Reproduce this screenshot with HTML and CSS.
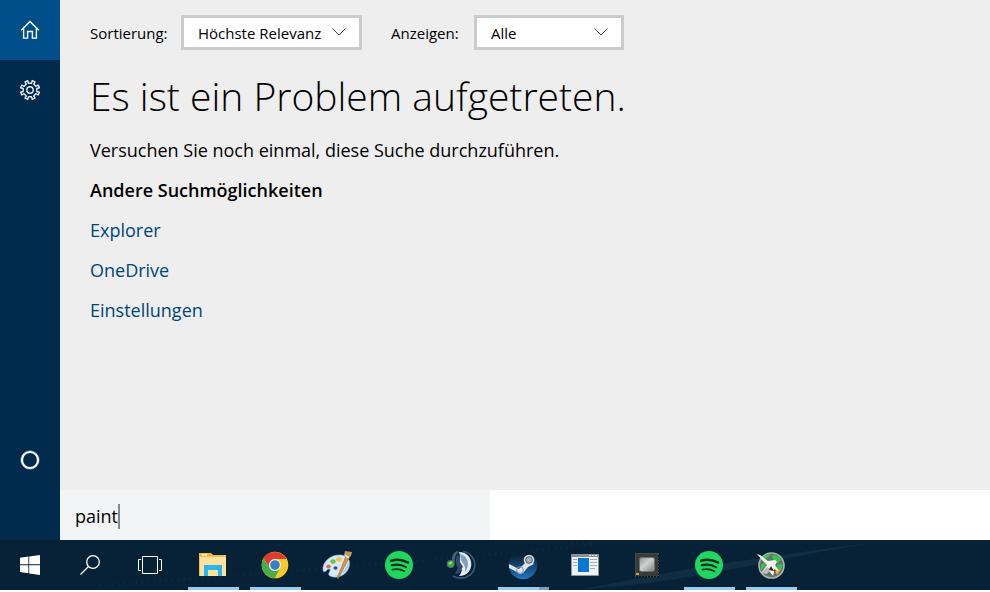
FILE: index.html
```html
<!DOCTYPE html>
<html lang="de">
<head>
<meta charset="utf-8">
<title>Suche</title>
<link rel="stylesheet" href="styles.css">
</head>
<body>
<div class="search">
  <nav class="rail">
    <button class="rail-button active" aria-label="Startseite">
      <svg width="20" height="20" viewBox="0 0 20 20" fill="none" stroke="#fff" stroke-width="1.4"><path d="M1.2 10.2 10 1.6l8.800 8.600M3.600 8.200v9.900h4v-6.600h4.800v6.600h4V8.200"/></svg>
    </button>
    <button class="rail-button" aria-label="Einstellungen">
      <svg width="22" height="22" viewBox="-11 -11 22 22" fill="none" stroke="#e8edf2" stroke-width="1.4" stroke-linejoin="round"><path d="M-1.7-6.8-2.2-9.4-5-8.2-3.7-5.9-5.9-3.7-8.2-5-9.4-2.2-6.8-1.5-6.8 1.5-9.4 2.2-8.2 5-5.9 3.7-3.7 5.9-5 8.2-2.2 9.4-1.5 6.8 1.5 6.8 2.2 9.4 5 8.2 3.7 5.9 5.9 3.7 8.2 5 9.4 2.2 6.8 1.5 6.8-1.5 9.4-2.2 8.2-5 5.9-3.7 3.7-5.9 5-8.2 2.2-9.4 1.5-6.8Z"/><circle r="3.2"/></svg>
    </button>
    <button class="rail-button cortana" aria-label="Cortana">
      <svg width="20" height="20" viewBox="0 0 20 20" fill="none"><circle cx="10" cy="10" r="9.2" stroke="#5c7f9f" stroke-width="1"/><circle cx="10" cy="10" r="8" stroke="#fff" stroke-width="2.2"/></svg>
    </button>
  </nav>
  <main class="panel">
    <section class="results">
      <form class="filters">
        <label for="sort">Sortierung:</label>
        <span class="picker sort">
          <select id="sort"><option>Höchste Relevanz</option></select>
          <svg class="chevron" width="16" height="10" viewBox="0 0 16 10" fill="none" stroke="#444" stroke-width="1"><path d="m1.500 1.500 6.500 6.500 6.500-6.500"/></svg>
        </span>
        <label class="second" for="show">Anzeigen:</label>
        <span class="picker show">
          <select id="show"><option>Alle</option></select>
          <svg class="chevron" width="16" height="10" viewBox="0 0 16 10" fill="none" stroke="#444" stroke-width="1"><path d="m1.500 1.500 6.500 6.500 6.500-6.500"/></svg>
        </span>
      </form>
      <h1>Es ist ein Problem aufgetreten.</h1>
      <p>Versuchen Sie noch einmal, diese Suche durchzuführen.</p>
      <h2>Andere Suchmöglichkeiten</h2>
      <ul>
        <li><a href="#explorer">Explorer</a></li>
        <li><a href="#onedrive">OneDrive</a></li>
        <li><a href="#settings">Einstellungen</a></li>
      </ul>
    </section>
    <div class="query">
      <div class="query-box">
        <input type="text" aria-label="Suchbegriff" value="paint">
        <span class="caret"></span>
      </div>
    </div>
  </main>
</div>
<footer class="taskbar">
  <svg class="texture" width="990" height="50" viewBox="0 0 990 50" preserveAspectRatio="none" aria-hidden="true"><path d="M580 50Q690 26 870 3L820 12Q700 36 650 43Z" fill="#16344a" opacity=".65"/><path d="M100 45Q250 35 450 18T570 3" fill="none" stroke="#183448" stroke-width="3" stroke-dasharray="1 5" opacity=".6"/></svg>
  <button class="system" aria-label="Start">
    <svg width="20" height="20" viewBox="0 0 20 20" fill="#fff"><path d="M0 2.800 8.400 1.600v7.700H0zM9.200 1.500 20 0v9.300H9.200zM0 10.200h8.400v8.100L0 17.100zM9.200 10.200H20V20L9.200 18.400z"/></svg>
  </button>
  <button class="system" aria-label="Suchen">
    <svg width="20" height="20" viewBox="0 0 20 20" fill="none" stroke="#fff" stroke-width="1.3"><circle cx="13" cy="7" r="6.3"/><path d="M8.500 11.500.500 19.500"/></svg>
  </button>
  <button class="system" aria-label="Taskansicht">
    <svg width="24" height="18" viewBox="0 0 24 18" fill="none" stroke="#fff"><path d="M4.500.500h15v17h-15zM3 3.500H.500v11H3M21 3.500h2.500v11H21"/></svg>
  </button>
  <div class="apps">
    <button class="app running" aria-label="Explorer">
      <svg width="28" height="28" viewBox="0 0 28 28"><path d="M0 2h12l2 2h13v21H0z" fill="#e9bd57"/><path d="M1 6h26v19H1z" fill="#ffe39a"/><path d="M1 2h11v3H1z" fill="#f6b91c"/><path d="M3 3h5v1.500H3z" fill="#fff"/><path d="M5 14h18v11h-4v-6H9v6H5z" fill="#29b6ee"/></svg>
    </button>
    <button class="app running" aria-label="Chrome">
      <svg width="28" height="28" viewBox="0 0 28 28"><circle cx="14" cy="14" r="13.300" fill="#f6c924"/><path d="M2.500 7.300A13.300 13.300 0 0 1 25.600 8H14a6 6 0 0 0-5.300 8.700z" fill="#df3b31"/><path d="M2.500 7.300A13.300 13.300 0 0 0 13.600 27.300L19.200 17A6 6 0 0 1 8.800 17z" fill="#46ad4c"/><circle cx="14" cy="14" r="6" fill="#e8f1f4"/><circle cx="14" cy="14" r="4.800" fill="#337fc4"/></svg>
    </button>
    <button class="app" aria-label="Paint">
      <svg width="30" height="30" viewBox="0 0 30 30"><path d="M1 20C0 12 9 4 19 5c7 1 10 6 8 12-2 7-9 11-16 10-5-1-5-3-3-6 1-3-3-2-4 0-1 1-3 1-3-1z" fill="#d7e9f7" stroke="#84afd1" stroke-width=".7"/><path d="M26 11c3 7-5 15-15 15 9-1 14-8 15-15z" fill="#a5cae8"/><ellipse cx="6.500" cy="16.500" rx="2.300" ry="1.900" fill="#df7055"/><ellipse cx="11" cy="11.500" rx="2.700" ry="2.200" fill="#68c344"/><ellipse cx="17" cy="9.500" rx="2.700" ry="2.200" fill="#f5c23a"/><ellipse cx="13.500" cy="18" rx="2" ry="1.800" fill="#29516e"/><path d="m24 6 3 2-11 21-1-1z" fill="#df9237" stroke="#8f5c2a" stroke-width=".5"/><path d="m22 5 1-4 7 1-1 4-4 3z" fill="#c39a58"/><path d="m23 5 4 3" stroke="#eee" stroke-width="1.500"/></svg>
    </button>
    <button class="app" aria-label="Spotify">
      <svg width="28" height="28" viewBox="0 0 28 28"><circle cx="14" cy="14" r="14" fill="#1ed760"/><g fill="none" stroke="#102d1c" stroke-linecap="round"><path d="M6 9.700q9-2.500 17 1.800" stroke-width="2.500"/><path d="M6.700 14.300q7.500-2 14.300 1.800" stroke-width="2.100"/><path d="M7.500 18.700q6.500-1.500 11.800 1.600" stroke-width="1.700"/></g></svg>
    </button>
    <button class="app" aria-label="TeamSpeak">
      <svg width="30" height="30" viewBox="0 0 30 30"><path d="M17 1.500A13.300 13.300 0 0 1 14 28q-4 0-7-2" fill="none" stroke="#3d5876" stroke-width="1.700"/><path d="M13 2c16 0 17 24 0 24 5-6 2-9 1-12-1-4 1-7-1-12z" fill="#e5ebf1"/><path d="M14 4c9 2 10 12 5 18 1-7-2-8-4-12z" fill="#7fa0bf"/><path d="M6 11Q5 4 11 1l2 1q-5 3-4 10z" fill="#47627f"/><path d="M11 5q4 1 3 7l3 5-2 2q0 5-6 5l3-6q-4-5-1-13z" fill="#314c6a"/><circle cx="4.700" cy="14" r="4" fill="#54677c"/><circle cx="4.700" cy="14" r="2.900" fill="#39b529"/><path d="m3 14 3-2" stroke="#bdf5a2" stroke-width="1.200"/></svg>
    </button>
    <button class="app running grouped" aria-label="Steam">
      <svg width="30" height="30" viewBox="0 0 30 30"><defs><linearGradient id="steam" x2="0" y2="1"><stop offset=".15" stop-color="#0b2035"/><stop offset="1" stop-color="#1e78c2"/></linearGradient></defs><circle cx="15" cy="15" r="14.300" fill="url(#steam)"/><path d="m1 14 10 5 6-6 1-5 8 6-6 3-4 5q-4 4-7 0l-8-4z" fill="#e0e4e7"/><circle cx="21" cy="10" r="5.300" fill="#d8dee3"/><circle cx="21" cy="10" r="3.300" fill="#a5b1bb" stroke="#4c5c69"/><circle cx="12" cy="20" r="3.300" fill="none" stroke="#8195a6"/></svg>
    </button>
    <button class="app" aria-label="Programmfenster">
      <svg width="28" height="22" viewBox="0 0 28 22"><path d="M.5.500h27v21H.500z" fill="#f0f1f2" stroke="#8c959c"/><path d="M1 1h26v2H1z" fill="#888e92"/><path d="M18 1h2v1h-2zM21 1h2v1h-2zM24 1h2v1h-2z" fill="#ddd"/><path d="M7 4h11v14H7z" fill="#0878d4"/><path d="M2 5.500h4M2 8.500h4M2 11.500h4M19 5.500h7M19 8.500h7M19 11.500h7M19 14.500h5" stroke="#a5abb0"/></svg>
    </button>
    <button class="app" aria-label="Prozessor">
      <svg width="24" height="24" viewBox="0 0 24 24"><defs><linearGradient id="chip" x2="1" y2="1"><stop stop-color="#8e9292"/><stop offset=".45" stop-color="#d0d2d2"/><stop offset="1" stop-color="#777b7b"/></linearGradient></defs><path d="M0 0h24v24H0z" fill="#454843"/><path d="M1 1h22v22H1z" fill="#383b38"/><path d="M1 23.500h22.500V1" fill="none" stroke="#111" stroke-dasharray="2 1"/><rect x="4.500" y="4.500" width="15" height="14" rx="2" fill="url(#chip)" stroke="#6d7270"/><path d="M1 20h3v2H1z" fill="#cda03b"/></svg>
    </button>
    <button class="app running" aria-label="Spotify">
      <svg width="28" height="28" viewBox="0 0 28 28"><circle cx="14" cy="14" r="14" fill="#1ed760"/><g fill="none" stroke="#102d1c" stroke-linecap="round"><path d="M6 9.700q9-2.500 17 1.800" stroke-width="2.500"/><path d="M6.700 14.300q7.500-2 14.300 1.800" stroke-width="2.100"/><path d="M7.500 18.700q6.500-1.500 11.800 1.600" stroke-width="1.700"/></g></svg>
    </button>
    <button class="app running" aria-label="Flugzeug">
      <svg width="28" height="28" viewBox="0 0 28 28"><circle cx="14.500" cy="14.500" r="12.500" fill="#65716c" stroke="#a9b2af" stroke-width="1.600"/><path d="M6 6Q9 3 13 3l-1 3-4 2zM15 4q7 0 9 5l-4 3-4-4zM20 14l6-1-2 6-4-1zM4 13l5-1-1 4-4 3z" fill="#30c947"/><path d="m18 20 6-2-4 6z" fill="#e2b63e"/><path d="m0 3 3 1 8 6 7-1 2 2-2 3 4 6-4-1-2 6-4-5-8 2 6-8-4-4z" fill="#f2f3f1"/><path d="m10 16 4 2-4 5-6-1z" fill="#b9bdba"/><path d="m14 15 3 5-5-1z" fill="#2f2522"/><path d="m17 18 2 1-2 3z" fill="#b22e2b"/></svg>
    </button>
  </div>
</footer>
</body>
</html>
```

FILE: styles.css
```css
* { box-sizing: border-box; }
body {
  margin: 0;
  min-height: 100vh;
  padding-bottom: 2px;
  display: flex;
  flex-direction: column;
  background: #fff;
  color: #000;
  font-family: "Open Sans", "Noto Sans", sans-serif;
  font-size: 18px;
}
button { border: 0; padding: 0; background: none; display: flex; align-items: center; justify-content: center; }
svg { display: block; }
.search { flex: 1; display: flex; }
.rail { width: 60px; display: flex; flex-direction: column; background: #002b4d; padding-bottom: 50px; }
.rail-button { width: 60px; height: 60px; }
.rail-button.active { background: #004e8a; }
.cortana { margin-top: auto; }
.panel { flex: 1; display: flex; flex-direction: column; }
.results { flex: 1; padding: 15px 30px; background: #eee; }
.filters { display: flex; align-items: center; font-size: 15px; }
.filters label { width: 91px; }
.filters .second { margin-left: 29px; width: 83px; }
.picker { position: relative; }
.sort { width: 181px; }
.show { width: 150px; }
.picker select {
  appearance: none;
  display: block;
  width: 100%;
  height: 35px;
  padding: 0 14px;
  border: 3px solid #cacccc;
  border-radius: 0;
  background: #fff;
  color: #000;
  font: inherit;
}
.chevron { position: absolute; right: 15px; top: 12px; pointer-events: none; }
h1 { margin: 16px 0 10px; font-size: 39px; line-height: 60px; font-weight: 300; }
p, h2, li { margin: 0 0 12px; font-size: 18px; line-height: 28px; }
h2 { font-weight: 600; }
ul { margin: 0; padding: 0; list-style: none; }
a { color: #00457c; text-decoration: none; }
.query { display: flex; height: 50px; }
.query-box { width: 430px; display: flex; align-items: center; padding: 2px 15px 0; background: #f2f3f5; }
.query input { border: 0; padding: 0; background: none; font: inherit; color: #000; outline: 0; field-sizing: content; }
.caret { width: 2px; height: 25px; background: #858789; }
.taskbar { position: relative; display: flex; height: 50px; background: #072237; }
.texture { position: absolute; left: 0; top: 0; width: 100%; }
.system, .app { position: relative; height: 50px; }
.system { width: 60px; }
.apps { display: flex; gap: 11px; margin-left: 8px; }
.app { width: 51px; padding-right: 2px; }
.running { border-bottom: 3px solid #9acbf1; padding-top: 3px; }
.grouped { border-image: linear-gradient(to right, #9acbf1 40px, #7e9fbd 40px) 1; }
```
